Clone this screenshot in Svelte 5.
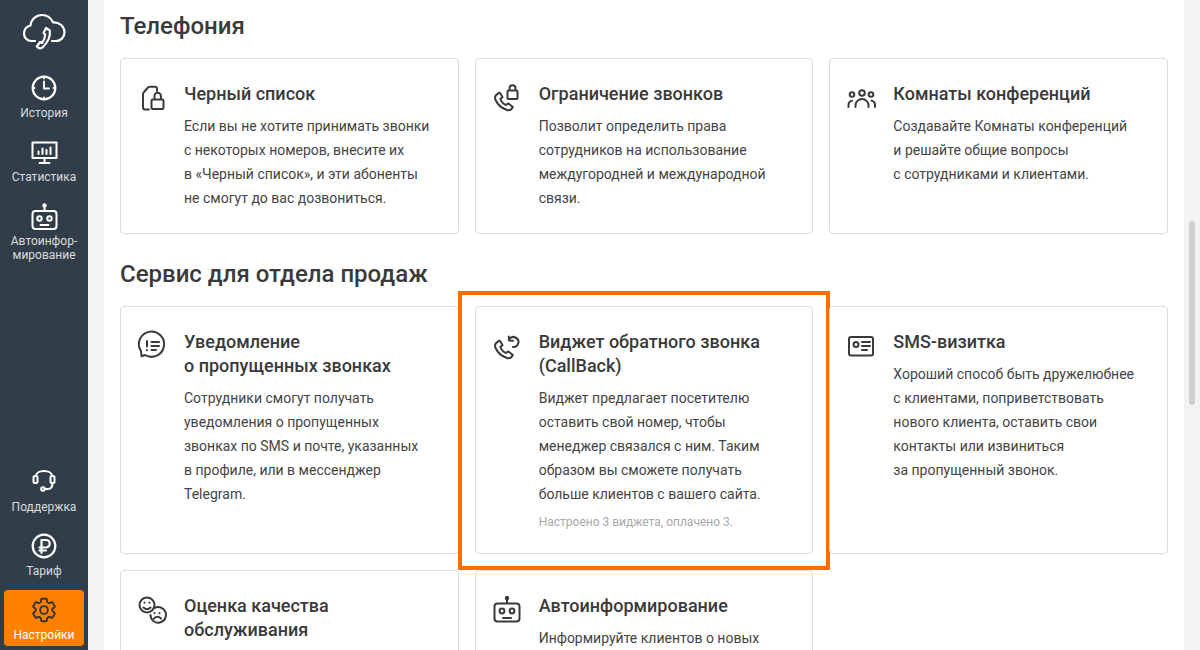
<script>
	const phone = 'M8.5 10.5 5.6 12.6C3.8 14 3.6 15.8 4.6 18 6.8 22.8 11 26.4 16 28 18.2 28.7 20 28 21 26.4L21.8 25 17.4 21.4 15 23C12.4 22 10.2 19.6 9.4 17L11.6 15Z';

	const telephony = [
		{ icon: 'lock', title: ['Черный список'], text: 'Если вы не хотите принимать звонки\nс некоторых номеров, внесите их\nв «Черный список», и эти абоненты\nне смогут до вас дозвониться.' },
		{ icon: 'phonelock', title: ['Ограничение звонков'], text: 'Позволит определить права\nсотрудников на использование\nмеждугородней и международной\nсвязи.' },
		{ icon: 'people', title: ['Комнаты конференций'], text: 'Создавайте Комнаты конференций\nи решайте общие вопросы\nс сотрудниками и клиентами.' }
	];

	const sales = [
		{ icon: 'message', title: ['Уведомление', 'о пропущенных звонках'], text: 'Сотрудники смогут получать\nуведомления о пропущенных\nзвонках по SMS и почте, указанных\nв профиле, или в мессенджер\nTelegram.' },
		{ icon: 'callback', title: ['Виджет обратного звонка', '(CallBack)'], text: 'Виджет предлагает посетителю\nоставить свой номер, чтобы\nменеджер связался с ним. Таким\nобразом вы сможете получать\nбольше клиентов с вашего сайта.', note: 'Настроено 3 виджета, оплачено 3.', marked: true },
		{ icon: 'card', title: ['SMS-визитка'], text: 'Хороший способ быть дружелюбнее\nс клиентами, поприветствовать\nнового клиента, оставить свои\nконтакты или извиниться\nза пропущенный звонок.' },
		{ icon: 'faces', title: ['Оценка качества', 'обслуживания'], text: '' },
		{ icon: 'robot', title: ['Автоинформирование'], text: 'Информируйте клиентов о новых' }
	];
</script>

{#snippet cardIcon(name)}
	<svg class="card-icon" viewBox="0 0 32 32" fill="none" stroke="#3a3a3a" stroke-width="2" stroke-linecap="round" stroke-linejoin="round">
		{#if name === 'lock'}
			<path d="M13 27.5H9a2 2 0 0 1-2-2V12.5q0-1.5 1-2.5l3.5-4q1-1.2 2.5-1.2H19a2 2 0 0 1 2 2V9" />
			<rect x="15.5" y="17.5" width="12" height="9.5" rx="1.2" />
			<path d="M18.5 17v-3a3.2 3.2 0 0 1 6.4 0v3" />
		{:else if name === 'phonelock'}
			<path d={phone} />
			<rect x="16.5" y="8.5" width="10" height="8.5" rx="1" />
			<path d="M18.5 8V6.2a3 3 0 0 1 6 0V8" />
		{:else if name === 'people'}
			<circle cx="17" cy="11" r="2.8" />
			<circle cx="7" cy="12.5" r="2.3" />
			<circle cx="26" cy="12.5" r="2.3" />
			<path d="M10.5 25v-1.5a6.5 6.5 0 0 1 13 0V25" />
			<path d="M3.5 25v-2a4.5 4.5 0 0 1 3.5-4.4" />
			<path d="M30 25v-2a4.5 4.5 0 0 0-3.5-4.4" />
		{:else if name === 'message'}
			<path d="M4.5 27.5 8 26.2A12.6 12.6 0 1 0 4 22.4L4.4 26Z" transform="translate(1 -1.2)" />
			<path d="M11 11v5.5M11 20v.2M15.5 12H23M15.5 16H23M15.5 20H20" />
		{:else if name === 'callback'}
			<path d={phone} />
			<path d="M22 17a5 5 0 1 0-3.700-7.800" />
			<path d="M17.800 6.500 18 10.500 22 10.700" />
		{:else if name === 'card'}
			<rect x="4" y="7" width="24" height="18.5" rx="2" />
			<circle cx="11" cy="14.5" r="2.5" />
			<path d="M17 12h8M17 16h8M17 20h5" />
		{:else if name === 'faces'}
			<circle cx="11" cy="11" r="7.5" />
			<path d="M7.5 13.5q3.5 3.5 7 0M8.5 8.5v.2M13.5 8.5v.2" />
			<path d="M18.2 14.2A7.8 7.8 0 1 1 14.5 21" />
			<path d="M18 24.5q3.5-3.5 7 0M18.5 19v.2M23.5 19v.2" />
		{:else if name === 'robot'}
			<rect x="3.5" y="9.5" width="25" height="18" rx="3" />
			<path d="M16 9V5" />
			<circle cx="16" cy="4" r="1.2" fill="#3a3a3a" />
			<circle cx="11" cy="17" r="2.4" />
			<circle cx="21" cy="17" r="2.4" />
			<path d="M12 24h8" />
		{/if}
	</svg>
{/snippet}

{#snippet card(item)}
	<article class="card" class:marked={item.marked}>
		{@render cardIcon(item.icon)}
		<div class="card-body">
			<h3>{#each item.title as line}<span>{line}</span>{/each}</h3>
			{#if item.text}<p>{item.text}</p>{/if}
			{#if item.note}<small>{item.note}</small>{/if}
		</div>
	</article>
{/snippet}

<div class="app">
	<nav class="sidebar">
		<div class="logo">
			<svg width="44" height="38" viewBox="0 0 44 38" fill="none" stroke="#fff" stroke-width="2.2" stroke-linecap="round" stroke-linejoin="round">
				<path d="M13 28H9.5C5 28 2 24.5 2 20.5 2 16.5 4.8 13.5 8.5 12.5 9 6.5 14 2 20 2 25 2 29 5 31 9.3 37.5 9 42.5 13.5 42.5 19.5 42.5 24.5 38.5 28 34 28H30" />
				<path d="M24 15 27.8 17.5C28.5 23 26 29 21 34 19.5 35.5 17.5 35.5 16 34.5L14.8 33.5 18 29 20 30C22 27.5 23 24.5 23.2 21.5L21.5 20Z" />
			</svg>
		</div>
		<a class="item">
			<svg viewBox="0 0 28 28" fill="none" stroke="#fff" stroke-width="2.2" stroke-linecap="round" stroke-linejoin="round">
				<circle cx="14" cy="14" r="11.3" />
				<path d="M14 7.5V14.5H19M14 3v1.5M14 23.5V25M3 14h1.5M23.5 14H25" stroke-width="1.8" />
			</svg>
			<span>История</span>
		</a>
		<a class="item">
			<svg viewBox="0 0 28 28" fill="none" stroke="#fff" stroke-width="2" stroke-linecap="round" stroke-linejoin="round">
				<rect x="2.5" y="4.5" width="24" height="15.5" />
				<path d="M14.5 20v5M9.5 25h10M8.5 16v-2.5M12.5 16V10.5M16.5 16v-4M20.5 16V9.5" />
			</svg>
			<span>Статистика</span>
		</a>
		<a class="item">
			<svg viewBox="0 0 28 28" fill="none" stroke="#fff" stroke-width="2" stroke-linecap="round" stroke-linejoin="round">
				<rect x="2.5" y="9" width="24" height="18" rx="3" />
				<path d="M14.5 9V4.5M10.5 23h8" />
				<circle cx="14.5" cy="3.5" r="1.2" fill="#fff" />
				<circle cx="9.5" cy="16.5" r="2.2" />
				<circle cx="19.5" cy="16.5" r="2.2" />
			</svg>
			<span>Автоинфор-<br />мирование</span>
		</a>
		<div class="spacer"></div>
		<a class="item">
			<svg viewBox="0 0 28 28" fill="none" stroke="#fff" stroke-width="2" stroke-linecap="round" stroke-linejoin="round">
				<rect x="3.5" y="8" width="4" height="7" rx="1.5" />
				<rect x="20.5" y="8" width="4" height="7" rx="1.5" />
				<path d="M6 8C6 5 9.5 3 14 3S22 5 22 8M14.8 21H18C20.8 21 22.5 18.5 22.5 15" />
				<circle cx="13" cy="21" r="1.8" />
			</svg>
			<span>Поддержка</span>
		</a>
		<a class="item">
			<svg viewBox="0 0 28 28" fill="none" stroke="#fff" stroke-width="2.2" stroke-linecap="round" stroke-linejoin="round">
				<circle cx="14" cy="14" r="11.3" />
				<path d="M11.5 21V8H16a3.7 3.7 0 0 1 0 7.5H9.5M9.5 18.5H16" />
			</svg>
			<span>Тариф</span>
		</a>
		<a class="item active">
			<svg viewBox="0 0 24 24" fill="none" stroke="#333" stroke-width="1.6" stroke-linejoin="round">
				<path d="M19.14 12.94c.04-.3.06-.61.06-.94 0-.32-.02-.64-.07-.94l2.03-1.58c.18-.14.23-.41.12-.61l-1.92-3.32c-.12-.22-.37-.29-.59-.22l-2.39.96c-.5-.38-1.03-.7-1.62-.94l-.36-2.54c-.04-.24-.24-.41-.48-.41h-3.84c-.24 0-.43.17-.47.41l-.36 2.54c-.59.24-1.13.57-1.62.94l-2.39-.96c-.22-.08-.47 0-.59.22L2.74 8.87c-.12.21-.08.47.12.61l2.03 1.58c-.05.3-.09.63-.09.94s.02.64.07.94l-2.03 1.58c-.18.14-.23.41-.12.61l1.92 3.32c.12.22.37.29.59.22l2.39-.96c.5.38 1.03.7 1.62.94l.36 2.54c.05.24.24.41.48.41h3.84c.24 0 .44-.17.47-.41l.36-2.54c.59-.24 1.13-.56 1.62-.94l2.39.96c.22.08.47 0 .59-.22l1.92-3.32c.12-.22.07-.47-.12-.61l-2.01-1.58z" />
				<circle cx="12" cy="12" r="3.3" />
			</svg>
			<span>Настройки</span>
		</a>
	</nav>

	<main class="panel">
		<h2>Телефония</h2>
		<div class="grid">
			{#each telephony as item}
				{@render card(item)}
			{/each}
		</div>
		<h2>Сервис для отдела продаж</h2>
		<div class="grid">
			{#each sales as item}
				{@render card(item)}
			{/each}
		</div>
	</main>

	<div class="scrollbar"><div class="thumb"></div></div>
</div>

<style>
	:global(body) {
		margin: 0;
		font-family: Roboto, 'Liberation Sans', sans-serif;
	}

	.app {
		display: flex;
		height: 650px;
		overflow: hidden;
		background: #f2f3f3;
	}

	.sidebar {
		flex: 0 0 88px;
		box-sizing: border-box;
		display: flex;
		flex-direction: column;
		align-items: center;
		gap: 8px;
		padding-bottom: 4px;
		background: #313e4a;
	}

	.logo {
		height: 60px;
		padding-top: 13px;
		box-sizing: border-box;
	}

	.spacer {
		flex: 1;
	}

	.item {
		box-sizing: border-box;
		width: 80px;
		min-height: 56px;
		padding: 6px 0 4px;
		display: flex;
		flex-direction: column;
		align-items: center;
		gap: 4px;
		border-radius: 4px;
		color: rgba(255, 255, 255, 0.82);
		font-size: 12px;
		line-height: 14px;
		text-align: center;
	}

	.item svg {
		display: block;
		width: 28px;
		height: 28px;
	}

	.item.active {
		background: #ff8000;
		color: #fff;
	}

	.panel {
		flex: 1;
		margin-left: 16px;
		padding: 10px 16px 0;
		background: #fff;
		min-width: 0;
	}

	h2 {
		margin: 0 0 16px;
		font-size: 24px;
		line-height: 32px;
		font-weight: 500;
		color: #3a3a3a;
	}

	.grid + h2 {
		margin-top: 24px;
	}

	.grid {
		display: grid;
		grid-template-columns: repeat(3, 1fr);
		gap: 16px;
	}

	.card {
		position: relative;
		display: flex;
		gap: 16px;
		padding: 23px 23px 23px 15px;
		border: 1px solid #dcdcdc;
		border-radius: 4px;
		background: #fff;
	}

	.card.marked::after {
		content: '';
		position: absolute;
		inset: -16px -18px -17px -18px;
		border: 4px solid #ff6d00;
		pointer-events: none;
	}

	.card-icon {
		flex: 0 0 32px;
		width: 32px;
		height: 32px;
	}

	.card-body {
		min-width: 0;
	}

	h3 {
		margin: 0 0 8px;
		font-size: 18px;
		line-height: 24px;
		font-weight: 500;
		color: #3a3a3a;
	}

	h3 span {
		display: block;
	}

	p {
		margin: 0;
		font-size: 14px;
		line-height: 24px;
		color: #444;
		white-space: pre-line;
	}

	small {
		display: block;
		margin-top: 8px;
		font-size: 12px;
		line-height: 16px;
		color: #a8a8a8;
	}

	.scrollbar {
		flex: 0 0 16px;
		display: flex;
		justify-content: center;
	}

	.thumb {
		width: 6px;
		height: 184px;
		margin-top: 221px;
		border-radius: 3px;
		background: #cfd1d1;
	}
</style>
